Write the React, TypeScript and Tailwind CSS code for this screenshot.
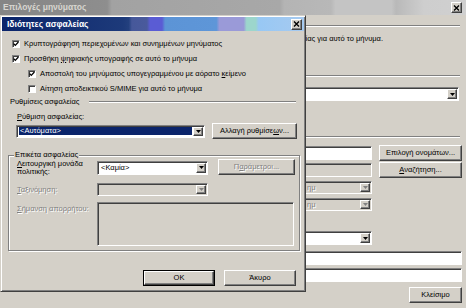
import type { ReactNode } from "react";

const raised =
  "border border-t-white border-l-white border-b-[#404040] border-r-[#404040] shadow-[inset_-1px_-1px_0_#808080] bg-[#d4d0c8]";
const sunken =
  "border border-t-[#808080] border-l-[#808080] border-b-white border-r-white shadow-[inset_1px_1px_0_#404040]";
const disabledText = "text-[#808080] [text-shadow:1px_1px_0_#fff]";

function CloseBtn() {
  return (
    <span className={`${raised} flex h-[11px] w-[11px] items-center justify-center`}>
      <svg width="7" height="6" viewBox="0 0 7 6">
        <path d="M1 0.5 L6 5.5 M6 0.5 L1 5.5" stroke="#000" strokeWidth="1.4" />
      </svg>
    </span>
  );
}

function Arrow({ disabled = false }: { disabled?: boolean }) {
  return (
    <span className={`${raised} flex h-full w-[10px] shrink-0 items-center justify-center`}>
      <svg width="5" height="3" viewBox="0 0 5 3">
        <path d="M0 0 H5 L2.5 3 Z" fill={disabled ? "#808080" : "#000"} />
      </svg>
    </span>
  );
}

function Combo({
  children,
  className = "",
  disabled = false,
  selected = false,
}: {
  children?: ReactNode;
  className?: string;
  disabled?: boolean;
  selected?: boolean;
}) {
  return (
    <div
      className={`${sunken} flex items-stretch overflow-hidden p-[1px] ${disabled ? "bg-[#d4d0c8]" : "bg-white"} ${className}`}
    >
      <div className="flex min-w-0 flex-1 items-center overflow-hidden pl-[1px] pr-[1px]">
        <span
          className={`whitespace-nowrap px-[1px] ${selected ? "w-full bg-[#0a246a] text-white" : ""} ${disabled ? disabledText : ""}`}
        >
          {children}
        </span>
      </div>
      <Arrow disabled={disabled} />
    </div>
  );
}

function Btn({
  children,
  className = "",
  disabled = false,
  def = false,
}: {
  children: ReactNode;
  className?: string;
  disabled?: boolean;
  def?: boolean;
}) {
  const inner = (
    <span
      className={`${raised} flex h-full w-full items-center justify-center whitespace-nowrap ${disabled ? disabledText : ""}`}
    >
      {children}
    </span>
  );
  if (def) {
    return <div className={`border border-black ${className}`}>{inner}</div>;
  }
  return <div className={className}>{inner}</div>;
}

function Check({ checked, children, indent = false }: { checked: boolean; children: ReactNode; indent?: boolean }) {
  return (
    <div className={`flex h-[15px] items-center gap-[4px] ${indent ? "pl-[26px]" : "pl-[10px]"}`}>
      <span className={`${sunken} flex h-[8px] w-[8px] items-center justify-center bg-white`}>
        {checked && (
          <svg width="6" height="6" viewBox="0 0 6 6">
            <path d="M0.6 2.6 L2.3 4.4 L5.4 1" stroke="#000" strokeWidth="1.3" fill="none" />
          </svg>
        )}
      </span>
      <span className="whitespace-nowrap">{children}</span>
    </div>
  );
}

function Etched({ className = "" }: { className?: string }) {
  return <div className={`h-[2px] border-t border-t-[#808080] border-b border-b-white ${className}`} />;
}

export default function App() {
  return (
    <div className="relative h-[308px] w-[466px] overflow-hidden bg-[#d4d0c8] font-['Liberation_Sans',Arial,sans-serif] text-[7.5px] leading-none text-black">
      {/* Background window: Επιλογές μηνύματος */}
      <div className="flex h-full flex-col">
        <div className="flex h-[15px] shrink-0 items-center justify-between bg-[linear-gradient(90deg,#858585_0%,#8e8e8e_23%,#a2a2a2_24%,#a8a8a8_60%,#b4b4b4_61%,#b8b8b8_71%,#c4c4c4_72%,#c4c4c4_84%,#b9b9b9_85%,#cecece_91%,#d0d0d0_100%)] pl-[3px] pr-[4px]">
          <span className="text-[8.5px] font-bold text-[#d8d6d0]">Επιλογές μηνύματος</span>
          <CloseBtn />
        </div>

        <div className="flex flex-col pl-[10px] pr-[4px]">
          <Etched className="mr-[2px] mt-[10px]" />
          <div className="mt-[7px] flex h-[10px] w-[373px] items-center justify-end whitespace-nowrap">
            Αλλαγή ρυθμίσεων ασφαλείας για αυτό το μήνυμα.
          </div>
          <Etched className="mr-[2px] mt-[31px]" />
          <Combo className="mr-[3px] mt-[10px] h-[14px] shrink-0" />
          <Etched className="mr-[2px] mt-[35px]" />

          <div className="mt-[7px] grid h-[16px] shrink-0 grid-cols-[1fr_83px] items-center gap-x-[7px]">
            <div className={`${sunken} h-[14px] bg-white`} />
            <Btn className="h-[16px]">Επιλογή ονομάτων...</Btn>
          </div>
          <div className="mt-[1px] grid h-[16px] shrink-0 grid-cols-[1fr_83px] items-center gap-x-[7px]">
            <div className={`${sunken} h-[14px] bg-[#d4d0c8]`} />
            <Btn className="h-[16px]">
              <span>
                <span className="underline">Α</span>ναζήτηση...
              </span>
            </Btn>
          </div>
          <div className="mt-[3px] grid h-[13px] shrink-0 grid-cols-[1fr_90px]">
            <Combo disabled className="h-[13px]">
              <span className="pl-[293px]">ημ</span>
            </Combo>
          </div>
          <div className="mt-[4px] grid h-[13px] shrink-0 grid-cols-[1fr_90px]">
            <Combo disabled className="h-[13px]">
              <span className="pl-[293px]">ημ</span>
            </Combo>
          </div>
          <div className="mt-[20px] grid h-[14px] shrink-0 grid-cols-[1fr_90px]">
            <Combo className="h-[14px]" />
          </div>
          <div className={`${sunken} mt-[6px] h-[14px] shrink-0 bg-white`} />
          <div className={`${sunken} mt-[3px] h-[14px] shrink-0 bg-white`} />
          <Btn className="mt-[5px] h-[16px] w-[53px] shrink-0 self-end">Κλείσιμο</Btn>
        </div>
      </div>

      {/* Foreground dialog: Ιδιότητες ασφαλείας */}
      <div className="absolute left-0 top-[15px] flex h-[277px] w-[306px] flex-col border border-t-[#d4d0c8] border-l-[#d4d0c8] border-b-[#404040] border-r-[#404040] bg-[#d4d0c8] p-[1px] shadow-[inset_1px_1px_0_#fff,inset_-1px_-1px_0_#808080]">
        <div className="flex h-[14px] shrink-0 items-center justify-between bg-[linear-gradient(90deg,#0a246a_0%,#1d3a7a_40%,#23407e_42%,#46589a_43%,#4a5a9c_48%,#5a5cd4_49%,#5a5cd4_53%,#5c94d6_54%,#5e96d8_71%,#9a9ad8_72%,#9a9ad8_80%,#9cd6cc_81%,#9cd6cc_84%,#98c8f4_85%,#a6caf0_100%)] pl-[5px] pr-[2px]">
          <span className="text-[8.5px] font-bold text-white">Ιδιότητες ασφαλείας</span>
          <CloseBtn />
        </div>

        <div className="flex flex-col">
          <div className="mt-[5px]">
            <Check checked>Κρυπτογράφηση περιεχομένων και συνημμένων μηνύματος</Check>
            <Check checked>
              Προσθήκη <span className="underline">ψ</span>ηφιακής υπογραφής σε αυτό το μήνυμα
            </Check>
            <Check checked indent>
              Αποστολή του μηνύματος υπογεγραμμένου με αόρατο <span className="underline">κ</span>είμενο
            </Check>
            <Check checked={false} indent>
              Αίτηση αποδεικτικού S/MIME για αυτό το μήνυμα
            </Check>
          </div>

          <div className="flex h-[12px] items-center gap-[10px] pl-[8px] pr-[8px]">
            <span className="whitespace-nowrap">Ρυθμίσεις ασφαλείας</span>
            <Etched className="flex-1" />
          </div>

          <div className="mt-[4px] flex h-[10px] items-center pl-[15px]">
            <span>
              <span className="underline">Ρ</span>ύθμιση ασφαλείας:
            </span>
          </div>

          <div className="mt-[1px] flex h-[16px] items-center gap-[7px] pl-[14px]">
            <Combo selected className="h-[13px] w-[189px]">
              &lt;Αυτόματα&gt;
            </Combo>
            <Btn className="h-[16px] w-[85px]">
              <span>
                Αλλαγή ρυθμίσε<span className="underline">ω</span>ν...
              </span>
            </Btn>
          </div>

          <fieldset className="ml-[6px] mr-[4px] mt-[12px] border border-[#808080] pb-[4px] pl-[8px] pr-[4px] shadow-[1px_1px_0_#fff,inset_1px_1px_0_#fff]">
            <legend className="-ml-[3px] bg-[#d4d0c8] px-[1px] leading-[8px]">Επικέτα ασφαλείας</legend>
            <div className="grid grid-cols-[70px_111px_77px] gap-x-[10px] gap-y-0">
              <div className="flex h-[17px] flex-col justify-center leading-[8px]">
                <span className="whitespace-nowrap">
                  <span className="underline">Λ</span>ειτουργική μονάδα
                </span>
                <span>πολιτικής:</span>
              </div>
              <div className="flex items-center">
                <Combo className="h-[14px] w-full">&lt;Καμία&gt;</Combo>
              </div>
              <Btn disabled className="h-[16px]">
                <span>
                  Π<span className="underline">α</span>ράμετροι...
                </span>
              </Btn>

              <div className={`mt-[7px] flex h-[13px] items-center whitespace-nowrap ${disabledText}`}>
                <span>
                  <span className="underline">Τ</span>αξινόμηση:
                </span>
              </div>
              <Combo disabled className="mt-[7px] h-[13px]" />
              <div className="mt-[7px]" />

              <div className={`mt-[6px] whitespace-nowrap pt-[3px] ${disabledText}`}>
                <span>
                  <span className="underline">Σ</span>ήμανση απορρήτου:
                </span>
              </div>
              <div className={`${sunken} col-span-2 mr-[1px] mt-[6px] h-[44px] bg-[#d4d0c8]`} />
            </div>
          </fieldset>

          <div className="mt-[19px] flex justify-end gap-[9px] pr-[8px]">
            <Btn def className="h-[16px] w-[72px]">
              OK
            </Btn>
            <Btn className="h-[16px] w-[72px]">Άκυρο</Btn>
          </div>
        </div>
      </div>
    </div>
  );
}
